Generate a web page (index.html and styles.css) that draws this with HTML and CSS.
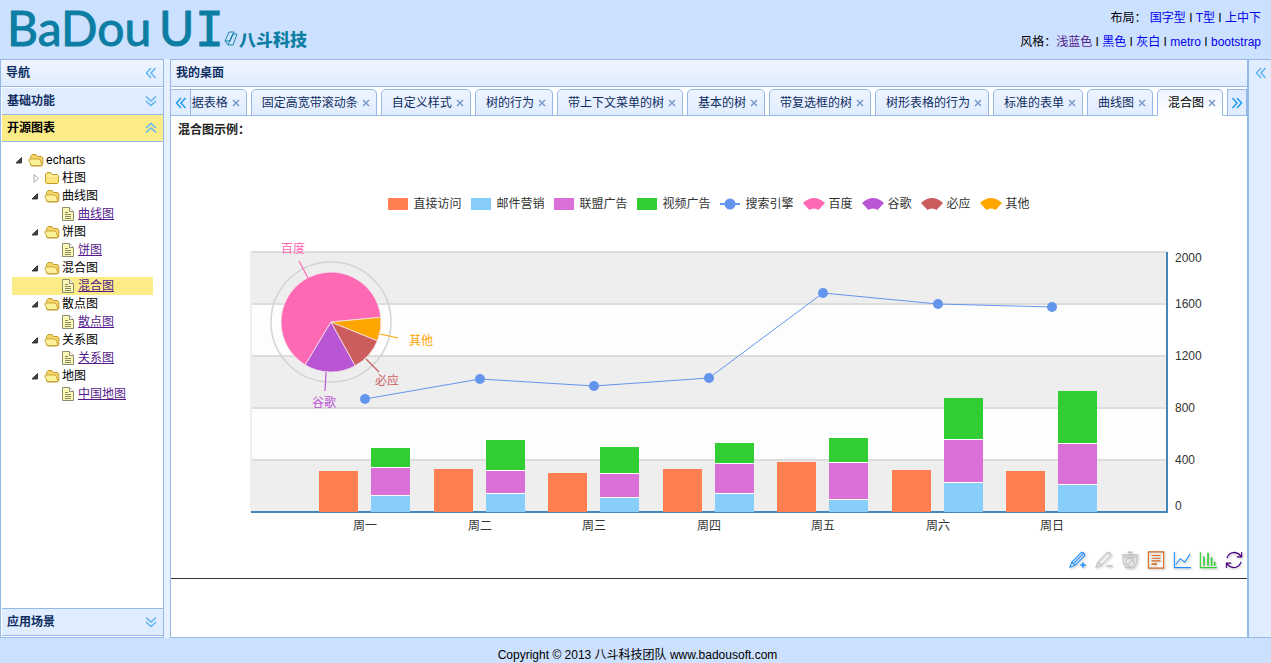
FILE: index.html
```html
<!DOCTYPE html>
<html lang="zh-CN">
<head>
    <meta charset="UTF-8">
    <meta name="viewport" content="width=device-width, initial-scale=1.0">
    <title>BaDou UI</title>
    <link rel="stylesheet" href="styles.css">
</head>
<body>
    <!-- shared icons -->
    <svg class="sprite" aria-hidden="true">
        <symbol id="chevrons" viewBox="0 0 12 12">
            <path d="M6 1 L1.5 6 L6 11 M10.5 1 L6 6 L10.5 11" fill="none" stroke="currentColor" stroke-width="1.5"/>
        </symbol>
        <symbol id="close" viewBox="0 0 8 8">
            <path d="M1 1 L7 7 M7 1 L1 7" fill="none" stroke="currentColor" stroke-width="1.3"/>
        </symbol>
        <symbol id="arrow-open" viewBox="0 0 16 18">
            <path d="M9.5 6.5 V12 H4 Z" fill="#444" stroke="#222" stroke-width="0.8"/>
        </symbol>
        <symbol id="arrow-closed" viewBox="0 0 16 18">
            <path d="M6 5.5 L10.5 9.5 L6 13.5 Z" fill="#fff" stroke="#aaa"/>
        </symbol>
        <symbol id="folder-open" viewBox="0 0 18 18">
            <path d="M2.5 14 V5.5 L4 3.5 H8 L9.5 5.5 H13.5 L14.8 7 V13.5 L13.5 15 H3.5 Z" fill="#f3d465" stroke="#c39a2c" stroke-linejoin="round"/>
            <path d="M3.2 14.5 L0.6 8.8 L1.4 8 H10.8 L12 8.8 L14 14.5 Z" fill="#fdf09a" stroke="#c9a136" stroke-width="0.9" stroke-linejoin="round"/>
        </symbol>
        <symbol id="folder" viewBox="0 0 18 18">
            <path d="M1.5 13.5 V5 L3 3.5 H6.5 L8 5.5 H13.5 L14.5 6.5 V13.5 L13.5 14.5 H2.5 Z" fill="#fbe47c" stroke="#c39a2c" stroke-linejoin="round"/>
            <path d="M2.5 7 H13.5" stroke="#fff6c0"/>
        </symbol>
        <symbol id="file" viewBox="0 0 18 18">
            <path d="M2.5 2.5 H9.5 L13.5 6.5 V15.5 H2.5 Z" fill="#fbf7b4" stroke="#8d8d70"/>
            <path d="M9.5 2.5 V6.5 H13.5" fill="#fff" stroke="#8d8d70"/>
            <path d="M5 7.5 H8 M5 9.5 H11 M5 11.5 H11 M5 13.5 H11" stroke="#8a8a66"/>
        </symbol>
        <symbol id="fan" viewBox="0 0 22 12">
            <path d="M0 5 Q11 -5 22 5 L15.5 12 Q14 10.4 11 10.4 Q8 10.4 6.5 12 Z" fill="currentColor"/>
        </symbol>
    </svg>

    <header class="top">
        <svg class="logo" viewBox="0 0 312 56" role="img" aria-label="BaDou UI 八斗科技">
            <text class="logo-name" x="7" y="46">BaDou</text>
            <text class="logo-name" x="159" y="46">U</text>
            <text class="logo-name logo-i" x="195" y="46">I</text>
            <path d="M225 41 L229 32 L234 32 L230 41 Z M228 45 L233 34 L237 34 L233 45 Z M225 41 L228 45 M229 42 L233 34" fill="none" stroke="#0c7ea3" stroke-width="0.9"/>
            <text class="logo-team" x="239" y="46">八斗科技</text>
        </svg>
        <nav class="options">
            <p>布局： <a href="#">国字型</a> I <a href="#">T型</a> I <a href="#">上中下</a></p>
            <p>风格：<a class="visited" href="#">浅蓝色</a> I <a href="#">黑色</a> I <a href="#">灰白</a> I <a href="#">metro</a> I <a href="#">bootstrap</a></p>
        </nav>
    </header>

    <div class="layout">
        <aside class="west">
            <div class="panel-header">
                <span>导航</span>
                <button class="tool" aria-label="收起导航"><svg><use href="#chevrons"/></svg></button>
            </div>
            <div class="accordion">
                <div class="accordion-header">
                    <span>基础功能</span>
                    <button class="tool down" aria-label="展开基础功能"><svg><use href="#chevrons"/></svg></button>
                </div>
                <div class="accordion-header selected">
                    <span>开源图表</span>
                    <button class="tool up" aria-label="收起开源图表"><svg><use href="#chevrons"/></svg></button>
                </div>
                <ul class="tree">
                    <li><div class="node"><svg class="hit"><use href="#arrow-open"/></svg><svg class="icon"><use href="#folder-open"/></svg>echarts</div>
                        <ul>
                            <li><div class="node level2"><svg class="hit"><use href="#arrow-closed"/></svg><svg class="icon"><use href="#folder"/></svg>柱图</div></li>
                            <li><div class="node level2"><svg class="hit"><use href="#arrow-open"/></svg><svg class="icon"><use href="#folder-open"/></svg>曲线图</div></li>
                            <li><div class="node level3"><svg class="icon"><use href="#file"/></svg><a href="#">曲线图</a></div></li>
                            <li><div class="node level2"><svg class="hit"><use href="#arrow-open"/></svg><svg class="icon"><use href="#folder-open"/></svg>饼图</div></li>
                            <li><div class="node level3"><svg class="icon"><use href="#file"/></svg><a href="#">饼图</a></div></li>
                            <li><div class="node level2"><svg class="hit"><use href="#arrow-open"/></svg><svg class="icon"><use href="#folder-open"/></svg>混合图</div></li>
                            <li><div class="node level3 selected"><svg class="icon"><use href="#file"/></svg><a href="#">混合图</a></div></li>
                            <li><div class="node level2"><svg class="hit"><use href="#arrow-open"/></svg><svg class="icon"><use href="#folder-open"/></svg>散点图</div></li>
                            <li><div class="node level3"><svg class="icon"><use href="#file"/></svg><a href="#">散点图</a></div></li>
                            <li><div class="node level2"><svg class="hit"><use href="#arrow-open"/></svg><svg class="icon"><use href="#folder-open"/></svg>关系图</div></li>
                            <li><div class="node level3"><svg class="icon"><use href="#file"/></svg><a href="#">关系图</a></div></li>
                            <li><div class="node level2"><svg class="hit"><use href="#arrow-open"/></svg><svg class="icon"><use href="#folder-open"/></svg>地图</div></li>
                            <li><div class="node level3"><svg class="icon"><use href="#file"/></svg><a href="#">中国地图</a></div></li>
                        </ul>
                    </li>
                </ul>
                <div class="accordion-header last">
                    <span>应用场景</span>
                    <button class="tool down" aria-label="展开应用场景"><svg><use href="#chevrons"/></svg></button>
                </div>
            </div>
        </aside>

        <main class="center">
            <div class="panel-header"><span>我的桌面</span></div>
            <div class="tabs-header">
                <button class="scroller" aria-label="向左滚动"><svg><use href="#chevrons"/></svg></button>
                <ul class="tabs">
                    <li class="tab"><a href="#">数据表格</a><button class="close" aria-label="关闭"><svg><use href="#close"/></svg></button></li>
                    <li class="tab"><a href="#">固定高宽带滚动条</a><button class="close" aria-label="关闭"><svg><use href="#close"/></svg></button></li>
                    <li class="tab"><a href="#">自定义样式</a><button class="close" aria-label="关闭"><svg><use href="#close"/></svg></button></li>
                    <li class="tab"><a href="#">树的行为</a><button class="close" aria-label="关闭"><svg><use href="#close"/></svg></button></li>
                    <li class="tab"><a href="#">带上下文菜单的树</a><button class="close" aria-label="关闭"><svg><use href="#close"/></svg></button></li>
                    <li class="tab"><a href="#">基本的树</a><button class="close" aria-label="关闭"><svg><use href="#close"/></svg></button></li>
                    <li class="tab"><a href="#">带复选框的树</a><button class="close" aria-label="关闭"><svg><use href="#close"/></svg></button></li>
                    <li class="tab"><a href="#">树形表格的行为</a><button class="close" aria-label="关闭"><svg><use href="#close"/></svg></button></li>
                    <li class="tab"><a href="#">标准的表单</a><button class="close" aria-label="关闭"><svg><use href="#close"/></svg></button></li>
                    <li class="tab"><a href="#">曲线图</a><button class="close" aria-label="关闭"><svg><use href="#close"/></svg></button></li>
                    <li class="tab active"><a href="#">混合图</a><button class="close" aria-label="关闭"><svg><use href="#close"/></svg></button></li>
                </ul>
                <button class="scroller right" aria-label="向右滚动"><svg><use href="#chevrons"/></svg></button>
            </div>

            <section class="example">
                <h2>混合图示例：</h2>
                <ul class="legend">
                    <li><i class="swatch direct"></i>直接访问</li>
                    <li><i class="swatch mail"></i>邮件营销</li>
                    <li><i class="swatch union"></i>联盟广告</li>
                    <li><i class="swatch video"></i>视频广告</li>
                    <li><svg class="mark" viewBox="0 0 20 12"><path d="M0 6 H20" stroke="#6495ed" stroke-width="2"/><circle cx="10" cy="6" r="5.5" fill="#6495ed"/></svg>搜索引擎</li>
                    <li><svg class="mark fan baidu"><use href="#fan"/></svg>百度</li>
                    <li><svg class="mark fan google"><use href="#fan"/></svg>谷歌</li>
                    <li><svg class="mark fan bing"><use href="#fan"/></svg>必应</li>
                    <li><svg class="mark fan other"><use href="#fan"/></svg>其他</li>
                </ul>

                <svg class="chart" viewBox="0 0 1076 300" role="img" aria-label="混合图">
                    <!-- split areas -->
                    <rect x="80" y="12" width="916" height="260" fill="#fdfdfd"/>
                    <path d="M80 12 H996 V64 H80 Z M80 116 H996 V168 H80 Z M80 220 H996 V272 H80 Z" fill="#eee"/>
                    <path d="M80 12 H996 M80 64 H996 M80 116 H996 M80 168 H996 M80 220 H996" stroke="#ddd" stroke-width="2"/>
                    <path d="M80 12 V272" stroke="#eee" stroke-width="2"/>
                    <!-- axes -->
                    <path d="M80 272 H997 M996 12 V272" stroke="#48b" stroke-width="2"/>
                    <g class="axis">
                        <text x="1004" y="22">2000</text>
                        <text x="1004" y="68">1600</text>
                        <text x="1004" y="120">1200</text>
                        <text x="1004" y="172">800</text>
                        <text x="1004" y="224">400</text>
                        <text x="1004" y="270">0</text>
                    </g>
                    <g class="axis days">
                        <text x="194" y="290">周一</text>
                        <text x="309" y="290">周二</text>
                        <text x="423" y="290">周三</text>
                        <text x="538" y="290">周四</text>
                        <text x="652" y="290">周五</text>
                        <text x="767" y="290">周六</text>
                        <text x="881" y="290">周日</text>
                    </g>
                    <!-- bars -->
                    <g fill="#ff7f50">
                        <rect x="148" y="231" width="39" height="41"/>
                        <rect x="263" y="229" width="39" height="43"/>
                        <rect x="377" y="233" width="39" height="39"/>
                        <rect x="492" y="229" width="39" height="43"/>
                        <rect x="606" y="222" width="39" height="50"/>
                        <rect x="721" y="230" width="39" height="42"/>
                        <rect x="835" y="231" width="39" height="41"/>
                    </g>
                    <g fill="#87cefa">
                        <rect x="200" y="256" width="39" height="16"/>
                        <rect x="315" y="254" width="39" height="18"/>
                        <rect x="429" y="258" width="39" height="14"/>
                        <rect x="544" y="254" width="39" height="18"/>
                        <rect x="658" y="260" width="39" height="12"/>
                        <rect x="773" y="243" width="39" height="29"/>
                        <rect x="887" y="245" width="39" height="27"/>
                    </g>
                    <g fill="#da70d6">
                        <rect x="200" y="228" width="39" height="27"/>
                        <rect x="315" y="231" width="39" height="22"/>
                        <rect x="429" y="234" width="39" height="23"/>
                        <rect x="544" y="224" width="39" height="29"/>
                        <rect x="658" y="223" width="39" height="36"/>
                        <rect x="773" y="200" width="39" height="42"/>
                        <rect x="887" y="204" width="39" height="40"/>
                    </g>
                    <g fill="#32cd32">
                        <rect x="200" y="208" width="39" height="19"/>
                        <rect x="315" y="200" width="39" height="30"/>
                        <rect x="429" y="207" width="39" height="26"/>
                        <rect x="544" y="203" width="39" height="20"/>
                        <rect x="658" y="198" width="39" height="24"/>
                        <rect x="773" y="158" width="39" height="41"/>
                        <rect x="887" y="151" width="39" height="52"/>
                    </g>
                    <path d="M200 255.5 H239 M200 227.5 H239 M315 253.5 H354 M315 230.5 H354 M429 257.5 H468 M429 233.5 H468 M544 253.5 H583 M544 223.5 H583 M658 259.5 H697 M658 222.5 H697 M773 242.5 H812 M773 199.5 H812 M887 244.5 H926 M887 203.5 H926" stroke="#fff"/>
                    <!-- line -->
                    <polyline points="194,159 309,139 423,146 538,138 652,53 767,64 881,67" fill="none" stroke="#6495ed"/>
                    <g fill="#6495ed">
                        <circle cx="194" cy="159" r="5"/>
                        <circle cx="309" cy="139" r="5"/>
                        <circle cx="423" cy="146" r="5"/>
                        <circle cx="538" cy="138" r="5"/>
                        <circle cx="652" cy="53" r="5"/>
                        <circle cx="767" cy="64" r="5"/>
                        <circle cx="881" cy="67" r="5"/>
                    </g>
                    <!-- pie -->
                    <circle cx="160" cy="82" r="60" fill="none" stroke="#d3d3d3" stroke-width="1.5"/>
                    <g stroke="#f3e6ee" stroke-width="0.8">
                        <path d="M160 82 L134.2 124.9 A50 50 0 1 1 209.8 77.3 Z" fill="#ff69b4"/>
                        <path d="M160 82 L184.2 125.7 A50 50 0 0 1 134.2 124.9 Z" fill="#ba55d3"/>
                        <path d="M160 82 L206.4 100.7 A50 50 0 0 1 184.2 125.7 Z" fill="#cd5c5c"/>
                        <path d="M160 82 L209.8 77.3 A50 50 0 0 1 206.4 100.7 Z" fill="#ffa500"/>
                    </g>
                    <g stroke-width="1.2">
                        <path d="M128 21 L137 38" stroke="#ff69b4"/>
                        <path d="M155 132 L154 151" stroke="#ba55d3"/>
                        <path d="M195 119 L208 132" stroke="#cd5c5c"/>
                        <path d="M209 94 L227 98" stroke="#ffa500"/>
                    </g>
                    <g class="pie-labels">
                        <text x="122" y="13" fill="#ff69b4">百度</text>
                        <text x="153" y="167" fill="#ba55d3">谷歌</text>
                        <text x="216" y="145" fill="#cd5c5c">必应</text>
                        <text x="250" y="105" fill="#ffa500">其他</text>
                    </g>
                </svg>

                <div class="toolbox">
                    <button aria-label="辅助线开关"><svg viewBox="0 0 20 20" stroke="#1e90ff"><path d="M1 18 L3 12.5 L14 1.5 Q17 1.5 17.5 5 L7 16 Z M3 12.5 L7 16 M5 14 L15.5 3.5"/><path d="M15.5 12.5 V18.5 M12.5 15.5 H18.5" stroke-width="1.6"/></svg></button>
                    <button aria-label="删除辅助线"><svg viewBox="0 0 20 20" stroke="#c3c3c3"><path d="M1 18 L3 12.5 L14 1.5 Q17 1.5 17.5 5 L7 16 Z M3 12.5 L7 16"/><path d="M12.5 16.5 H19.5" stroke-width="1.6"/></svg></button>
                    <button aria-label="清空辅助线"><svg viewBox="0 0 20 20" stroke="#c3c3c3"><path d="M1 4.5 H19 M7.5 1.5 H12.5" stroke-width="1.8"/><path d="M2 7 Q2.5 15 5.5 18.5 H14.5 Q17.5 15 18 7 Z"/><circle cx="10" cy="12.5" r="4.5"/><path d="M7 15.5 L13 9.5"/></svg></button>
                    <button aria-label="数据视图"><svg viewBox="0 0 20 20" stroke="#d2691e"><path d="M1.5 1 H18.5 V19 H1.5 Z M5 5 H15 M5 8 H15 M5 11 H15"/><path d="M5 14.5 H11" stroke-width="1.8"/></svg></button>
                    <button aria-label="折线图切换"><svg viewBox="0 0 20 20" stroke="#1e90ff"><path d="M1.5 1 V18.5 H20"/><path d="M3 15 L8 8.5 L13 12.5 L19 3.5"/></svg></button>
                    <button aria-label="柱形图切换"><svg viewBox="0 0 20 20" stroke="#32cd32"><path d="M1.5 1 V18.5 H20"/><path d="M5.5 6 V16.5 M10 2 V16.5 M14 7 V16.5 M17.5 12 V16.5" stroke-width="1.8"/></svg></button>
                    <button aria-label="还原"><svg viewBox="0 0 20 20" stroke="#4b0082"><path d="M2 8 Q4.5 1.5 10.5 1.5 Q15 2 18 6 M18.5 1 V6.5 H13"/><path d="M18 12 Q15.5 18.5 9.5 18.5 Q5 18 2 14 M1.5 19 V13.5 H7"/></svg></button>
                </div>
            </section>
        </main>

        <aside class="east">
            <button class="tool" aria-label="展开右侧"><svg><use href="#chevrons"/></svg></button>
        </aside>
    </div>

    <footer class="bottom">Copyright © 2013 八斗科技团队 www.badousoft.com</footer>
</body>
</html>
```

FILE: styles.css
```css
* {
    box-sizing: border-box;
}

body {
    display: flex;
    flex-direction: column;
    min-height: 100vh;
    margin: 0;
    background: #cce1ff;
    color: #000;
    font: 12px/18px "Liberation Sans", "Noto Sans CJK SC", sans-serif;
}

ul {
    list-style: none;
    margin: 0;
    padding: 0;
}

button {
    display: flex;
    align-items: center;
    justify-content: center;
    padding: 0;
    border: 0;
    background: none;
    cursor: pointer;
}

a {
    color: #0000ee;
    text-decoration: none;
}

.sprite {
    display: none;
}

/* header */
.top {
    display: flex;
    justify-content: space-between;
    height: 59px;
    padding: 0 10px 0 0;
}

.logo {
    width: 312px;
    height: 56px;
    fill: #0c7ea3;
}

.logo-name {
    font: 48px Lato, sans-serif;
    stroke: #0c7ea3;
    stroke-width: 1;
    stroke-linejoin: round;
}

.logo-i {
    font-family: "DejaVu Sans Mono", monospace;
}

.logo-team {
    font: 900 17px "Noto Sans CJK SC", sans-serif;
}

.options {
    padding-top: 9px;
    text-align: right;
}

.options p {
    margin: 0 0 6px;
}

.options .visited {
    color: #551a8b;
}

/* layout */
.layout {
    display: flex;
    flex: 1;
    background: #e6f0ff;
}

.west {
    display: flex;
    flex-direction: column;
    width: 164px;
    border: 1px solid #95b8e7;
    background: #fff;
}

.center {
    flex: 1;
    min-width: 0;
    margin-left: 6px;
    border: 1px solid #95b8e7;
    background: #fff;
}

.east {
    width: 23px;
    border: 1px solid #95b8e7;
    border-right: 0;
    background: #e0ecff;
}

.east .tool {
    width: 24px;
    height: 26px;
}

.panel-header,
.accordion-header {
    display: flex;
    align-items: center;
    justify-content: space-between;
    height: 27px;
    padding: 0 6px 0 5px;
    border-bottom: 1px solid #95b8e7;
    color: #0e2d5f;
    font-weight: bold;
}

.panel-header {
    background: linear-gradient(#eff5ff, #e0ecff);
}

.accordion {
    display: flex;
    flex: 1;
    flex-direction: column;
    padding: 1px 0 1px 1px;
}

.accordion-header {
    background: #e0ecff;
}

.accordion-header.selected {
    background: #fbec88;
    color: #000;
}

.accordion-header.last {
    height: 28px;
    border-top: 1px solid #95b8e7;
}

.tool {
    color: #5fb4f2;
}

.tool svg {
    width: 12px;
    height: 12px;
}

.down svg {
    transform: rotate(-90deg);
}

.up svg {
    transform: rotate(90deg);
}

/* tree */
.tree {
    flex: 1;
    padding: 9px 10px;
}

.node {
    display: flex;
    align-items: center;
    height: 18px;
}

.node.level2 {
    padding-left: 16px;
}

.node.level3 {
    padding-left: 48px;
}

.node.selected {
    background: #fbec88;
}

.node a {
    color: #551a8b;
    text-decoration: underline;
}

.hit {
    width: 16px;
    height: 18px;
}

.icon {
    width: 18px;
    height: 18px;
}

/* tabs */
.tabs-header {
    display: flex;
    height: 29px;
    padding-top: 2px;
    border-bottom: 1px solid #95b8e7;
}

.scroller {
    width: 20px;
    border-top: 1px solid #95b8e7;
    border-right: 1px solid #95b8e7;
    background: #e0ecff;
    color: #1e9bf0;
}

.scroller.right {
    border-left: 1px solid #95b8e7;
}

.scroller svg {
    width: 12px;
    height: 12px;
}

.scroller.right svg {
    transform: rotate(180deg);
}

.tabs {
    display: flex;
    flex: 1;
    justify-content: flex-end;
    gap: 4px;
    height: 27px;
    min-width: 0;
    padding-right: 4px;
    overflow: hidden;
}

.tab {
    display: flex;
    flex: none;
    align-items: center;
    gap: 4px;
    height: 27px;
    padding: 0 6px 0 10px;
    border: 1px solid #95b8e7;
    border-radius: 5px 5px 0 0;
    background: linear-gradient(#eff5ff, #e0ecff);
}

.tab a {
    color: #0e2d5f;
}

.tab.active {
    border-bottom-color: #fff;
    background: linear-gradient(#eff5ff, #fff);
}

.tab.active a {
    color: #000;
}

.close {
    width: 8px;
    height: 8px;
    color: #6f93c8;
}

.close svg {
    width: 8px;
    height: 8px;
}

/* chart */
.example {
    padding-bottom: 8px;
    border-bottom: 1px solid #333;
}

.example h2 {
    margin: 0;
    padding: 5px 7px;
    color: #222;
    font-size: 12px;
    line-height: 18px;
}

.legend {
    display: flex;
    justify-content: center;
    gap: 10px;
    margin: 50px 0 26px;
    color: #333;
    line-height: 20px;
}

.legend li {
    display: flex;
    align-items: center;
    gap: 5px;
}

.swatch {
    width: 20px;
    height: 12px;
}

.direct {
    background: #ff7f50;
}

.mail {
    background: #87cefa;
}

.union {
    background: #da70d6;
}

.video {
    background: #32cd32;
}

.mark {
    width: 20px;
    height: 12px;
}

/* the fan is a bit wider than its slot */
.mark.fan {
    width: 22px;
    margin: 0 -1px;
}

.baidu {
    color: #ff69b4;
}

.google {
    color: #ba55d3;
}

.bing {
    color: #cd5c5c;
}

.other {
    color: #ffa500;
}

.chart {
    display: block;
    width: 100%;
}

.axis {
    fill: #333;
}

.days,
.pie-labels {
    text-anchor: middle;
}

.toolbox {
    display: flex;
    justify-content: flex-end;
    gap: 8px;
    padding: 10px 4px 0 0;
}

.toolbox button {
    width: 18px;
    height: 20px;
}

.toolbox svg {
    width: 18px;
    height: 18px;
    fill: none;
    stroke-width: 1.2;
    filter: drop-shadow(1px 1px 1px #bbb);
}

.bottom {
    height: 25px;
    padding: 8px 0 0 4px;
    text-align: center;
}
```
